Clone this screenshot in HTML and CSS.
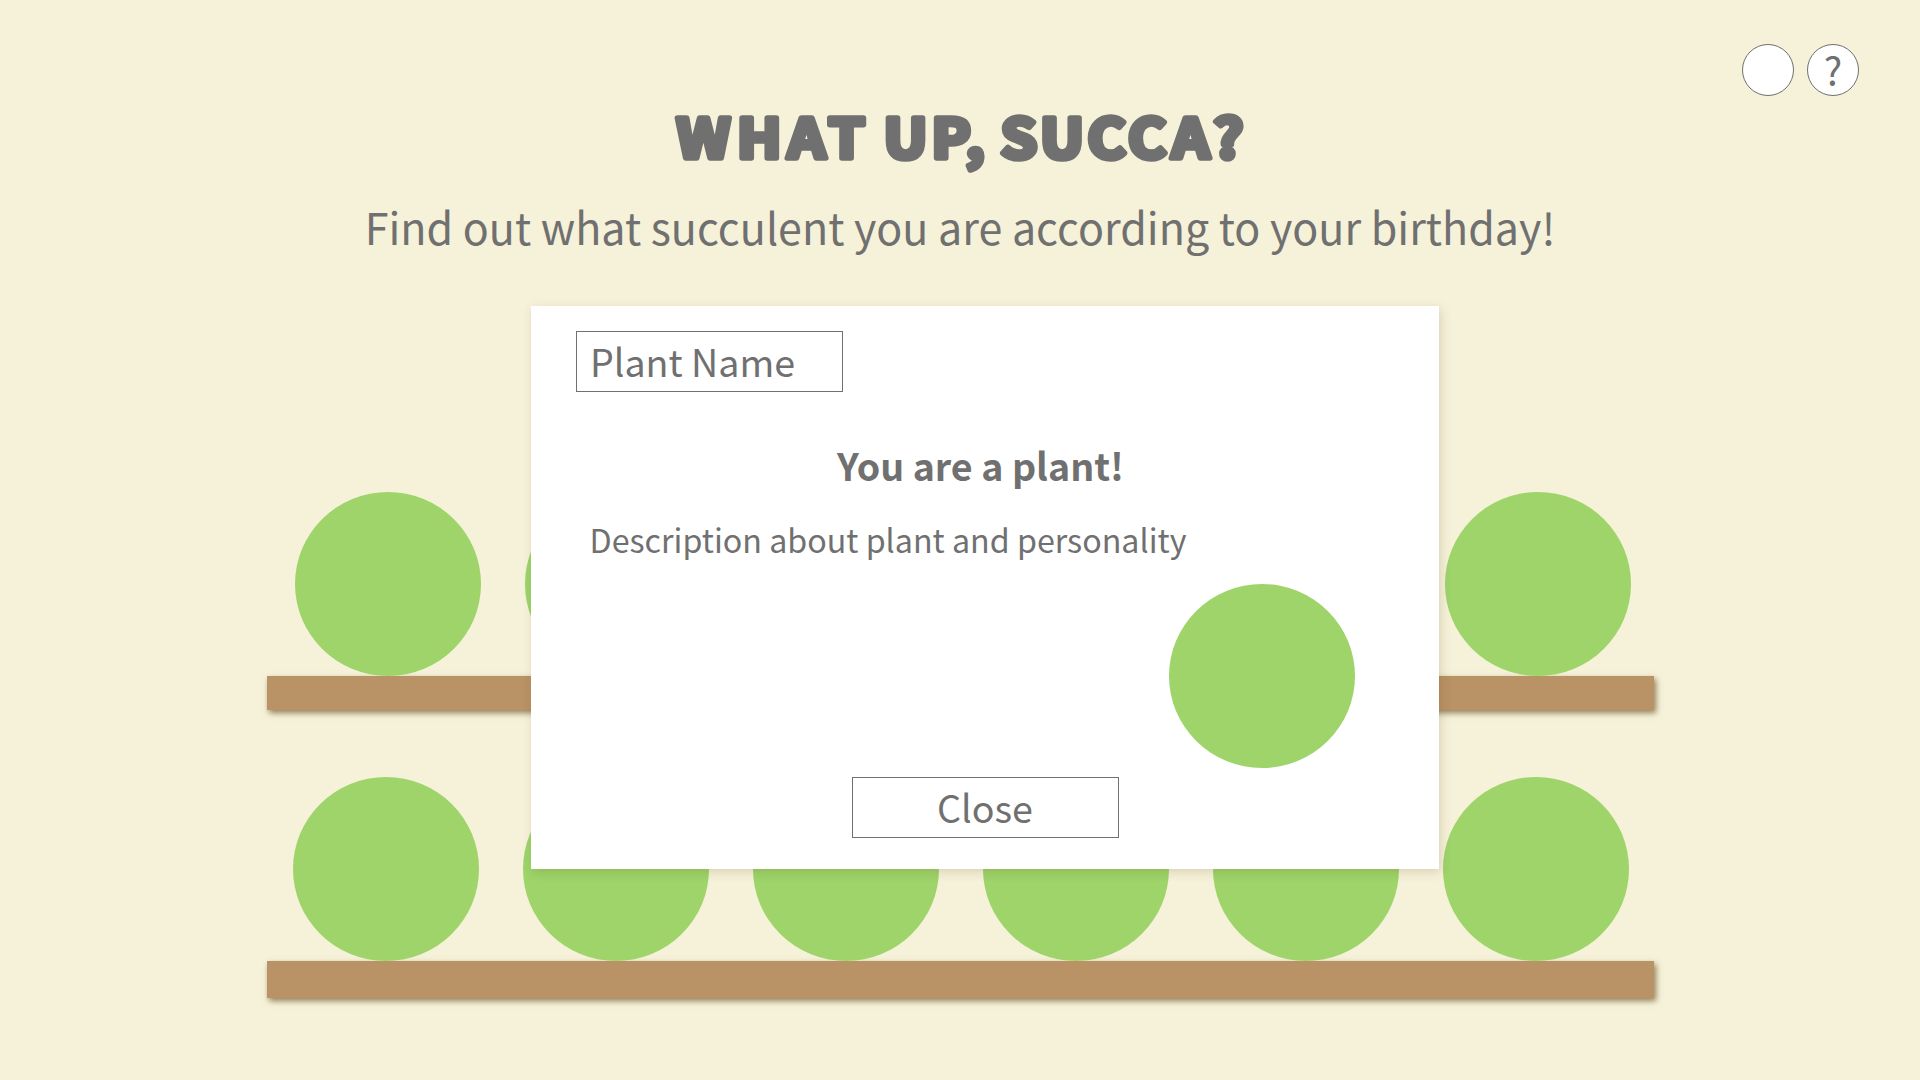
FILE: index.html
```html
<!DOCTYPE html>
<html lang="en">
<head>
<meta charset="utf-8">
<title>What Up, Succa?</title>
<link rel="stylesheet" href="styles.css">
</head>
<body>
<div class="page">
  <nav class="tools">
    <button class="round" aria-label="Sound"></button>
    <button class="round">?</button>
  </nav>
  <header class="intro">
    <h1 class="title">
      <svg class="lettering" width="570" height="82" viewBox="0 0 570 82">
        <text transform="scale(1.08 1)" y="62" x="1.5 57.5 104.5 142 178 193 237.5 269 288 301.5 338 382 419.5 460 498.5">WHAT UP, SUCCA?</text>
      </svg>
    </h1>
    <p class="subtitle">Find out what succulent you are according to your birthday!</p>
  </header>
  <main class="shelves">
    <section class="row">
      <div class="plants first"><i class="plant"></i><i class="plant"></i><i class="plant"></i><i class="plant"></i><i class="plant"></i><i class="plant"></i></div>
      <div class="shelf"></div>
    </section>
    <section class="row">
      <div class="plants"><i class="plant"></i><i class="plant"></i><i class="plant"></i><i class="plant"></i><i class="plant"></i><i class="plant"></i></div>
      <div class="shelf thick"></div>
    </section>
  </main>
  <div class="modal" role="dialog">
    <div class="box name">Plant Name</div>
    <h2 class="result">You are a plant!</h2>
    <p class="description">Description about plant and personality</p>
    <i class="plant portrait"></i>
    <button class="box close">Close</button>
  </div>
</div>
</body>
</html>
```
FILE: styles.css
```css
* { box-sizing: border-box; margin: 0; padding: 0; }
body { background: #f6f2d9; color: #707070; font-family: "Noto Sans CJK SC", "Noto Sans", sans-serif; }
button { font: inherit; color: inherit; }
.page { position: relative; width: 1920px; height: 1080px; overflow: hidden; display: flex; flex-direction: column; }
.tools { display: flex; justify-content: flex-end; gap: 13px; height: 96px; padding: 44px 61px 0 0; }
.round { width: 52px; height: 52px; border: 1px solid #707070; border-radius: 50%; background: #fff; font-size: 39px; line-height: 46px; padding-bottom: 2px; }
.intro { height: 396px; text-align: center; white-space: nowrap; }
.title { display: flex; justify-content: center; height: 82px; }
.lettering { overflow: visible; font-size: 54.4px; font-weight: 700; fill: #707070; stroke: #707070; stroke-width: 5.6px; stroke-linejoin: round; }
.subtitle { font-size: 43px; transform: scaleY(1.02); line-height: 97px; }
.shelves { width: 1387px; margin-left: 267px; display: flex; flex-direction: column; gap: 67px; }
.plants { display: flex; gap: 44px; padding-left: 26px; }
.first { padding-left: 28px; }
.plant { flex: none; display: block; width: 186px; height: 184px; border-radius: 50%; background: #9ed46a; }
.shelf { height: 34px; background: #b99265; box-shadow: 2px 3px 6px rgba(80, 50, 0, .6); }
.thick { height: 37px; }
.modal { position: absolute; left: 531px; top: 306px; width: 908px; height: 563px; padding: 25px 45px; background: #fff; box-shadow: 2px 3px 10px rgba(80, 50, 0, .17); display: flex; flex-direction: column; }
.box { width: 267px; height: 61px; border: 1px solid #707070; background: #fff; font-size: 37.6px; line-height: 57px; }
.name { padding-left: 13px; }
.result { margin-top: 43px; font-size: 37.6px; line-height: 60px; text-align: center; padding-right: 9px; }
.description { margin: 20px 0 0 13.5px; font-size: 32.22px; line-height: 48px; }
.portrait { align-self: flex-end; margin: 21px 39px 0 0; }
.close { align-self: center; margin-top: 9px; padding-bottom: 2px; }
```
